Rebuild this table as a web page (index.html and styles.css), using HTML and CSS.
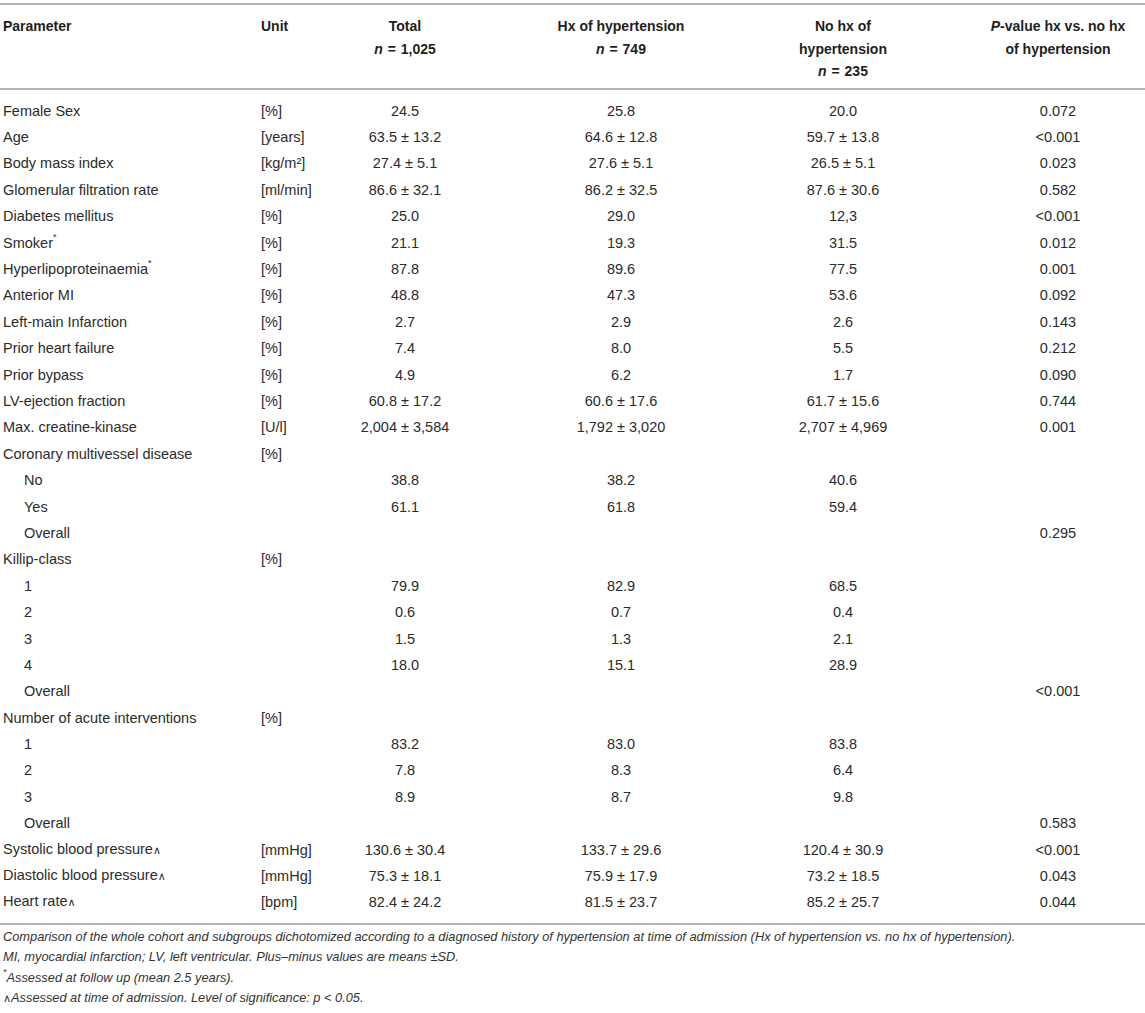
FILE: index.html
```html
<!DOCTYPE html>
<html>
<head>
<meta charset="utf-8">
<link rel="stylesheet" href="styles.css">
</head>
<body>
<div class="wrap">
<table class="tbl">
<colgroup>
<col class="c1"><col class="c2"><col class="c3"><col class="c4"><col class="c5"><col class="c6">
</colgroup>
<thead>
<tr>
<th class="l p1">Parameter</th>
<th class="l p2">Unit</th>
<th class="p3">Total<br><i>n</i> <span class="eq">=</span> 1,025</th>
<th class="p4">Hx of hypertension<br><i>n</i> <span class="eq">=</span> 749</th>
<th class="p5">No hx of<br>hypertension<br><i>n</i> <span class="eq">=</span> 235</th>
<th class="p6"><i>P</i>-value hx vs. no hx<br>of hypertension</th>
</tr>
</thead>
<tbody>
<tr class="first"><td class="p1">Female Sex</td><td class="p2">[%]</td><td class="p3">24.5</td><td class="p4">25.8</td><td class="p5">20.0</td><td class="p6">0.072</td></tr>
<tr><td class="p1">Age</td><td class="p2">[years]</td><td class="p3">63.5 ± 13.2</td><td class="p4">64.6 ± 12.8</td><td class="p5">59.7 ± 13.8</td><td class="p6">&lt;0.001</td></tr>
<tr><td class="p1">Body mass index</td><td class="p2">[kg/m²]</td><td class="p3">27.4 ± 5.1</td><td class="p4">27.6 ± 5.1</td><td class="p5">26.5 ± 5.1</td><td class="p6">0.023</td></tr>
<tr><td class="p1">Glomerular filtration rate</td><td class="p2">[ml/min]</td><td class="p3">86.6 ± 32.1</td><td class="p4">86.2 ± 32.5</td><td class="p5">87.6 ± 30.6</td><td class="p6">0.582</td></tr>
<tr><td class="p1">Diabetes mellitus</td><td class="p2">[%]</td><td class="p3">25.0</td><td class="p4">29.0</td><td class="p5">12,3</td><td class="p6">&lt;0.001</td></tr>
<tr><td class="p1">Smoker<sup>*</sup></td><td class="p2">[%]</td><td class="p3">21.1</td><td class="p4">19.3</td><td class="p5">31.5</td><td class="p6">0.012</td></tr>
<tr><td class="p1">Hyperlipoproteinaemia<sup>*</sup></td><td class="p2">[%]</td><td class="p3">87.8</td><td class="p4">89.6</td><td class="p5">77.5</td><td class="p6">0.001</td></tr>
<tr><td class="p1">Anterior MI</td><td class="p2">[%]</td><td class="p3">48.8</td><td class="p4">47.3</td><td class="p5">53.6</td><td class="p6">0.092</td></tr>
<tr><td class="p1">Left-main Infarction</td><td class="p2">[%]</td><td class="p3">2.7</td><td class="p4">2.9</td><td class="p5">2.6</td><td class="p6">0.143</td></tr>
<tr><td class="p1">Prior heart failure</td><td class="p2">[%]</td><td class="p3">7.4</td><td class="p4">8.0</td><td class="p5">5.5</td><td class="p6">0.212</td></tr>
<tr><td class="p1">Prior bypass</td><td class="p2">[%]</td><td class="p3">4.9</td><td class="p4">6.2</td><td class="p5">1.7</td><td class="p6">0.090</td></tr>
<tr><td class="p1">LV-ejection fraction</td><td class="p2">[%]</td><td class="p3">60.8 ± 17.2</td><td class="p4">60.6 ± 17.6</td><td class="p5">61.7 ± 15.6</td><td class="p6">0.744</td></tr>
<tr><td class="p1">Max. creatine-kinase</td><td class="p2">[U/l]</td><td class="p3">2,004 ± 3,584</td><td class="p4">1,792 ± 3,020</td><td class="p5">2,707 ± 4,969</td><td class="p6">0.001</td></tr>
<tr><td class="p1">Coronary multivessel disease</td><td class="p2">[%]</td><td class="p3"></td><td class="p4"></td><td class="p5"></td><td class="p6"></td></tr>
<tr><td class="p1 sub">No</td><td class="p2"></td><td class="p3">38.8</td><td class="p4">38.2</td><td class="p5">40.6</td><td class="p6"></td></tr>
<tr><td class="p1 sub">Yes</td><td class="p2"></td><td class="p3">61.1</td><td class="p4">61.8</td><td class="p5">59.4</td><td class="p6"></td></tr>
<tr><td class="p1 sub">Overall</td><td class="p2"></td><td class="p3"></td><td class="p4"></td><td class="p5"></td><td class="p6">0.295</td></tr>
<tr><td class="p1">Killip-class</td><td class="p2">[%]</td><td class="p3"></td><td class="p4"></td><td class="p5"></td><td class="p6"></td></tr>
<tr><td class="p1 sub">1</td><td class="p2"></td><td class="p3">79.9</td><td class="p4">82.9</td><td class="p5">68.5</td><td class="p6"></td></tr>
<tr><td class="p1 sub">2</td><td class="p2"></td><td class="p3">0.6</td><td class="p4">0.7</td><td class="p5">0.4</td><td class="p6"></td></tr>
<tr><td class="p1 sub">3</td><td class="p2"></td><td class="p3">1.5</td><td class="p4">1.3</td><td class="p5">2.1</td><td class="p6"></td></tr>
<tr><td class="p1 sub">4</td><td class="p2"></td><td class="p3">18.0</td><td class="p4">15.1</td><td class="p5">28.9</td><td class="p6"></td></tr>
<tr><td class="p1 sub">Overall</td><td class="p2"></td><td class="p3"></td><td class="p4"></td><td class="p5"></td><td class="p6">&lt;0.001</td></tr>
<tr><td class="p1">Number of acute interventions</td><td class="p2">[%]</td><td class="p3"></td><td class="p4"></td><td class="p5"></td><td class="p6"></td></tr>
<tr><td class="p1 sub">1</td><td class="p2"></td><td class="p3">83.2</td><td class="p4">83.0</td><td class="p5">83.8</td><td class="p6"></td></tr>
<tr><td class="p1 sub">2</td><td class="p2"></td><td class="p3">7.8</td><td class="p4">8.3</td><td class="p5">6.4</td><td class="p6"></td></tr>
<tr><td class="p1 sub">3</td><td class="p2"></td><td class="p3">8.9</td><td class="p4">8.7</td><td class="p5">9.8</td><td class="p6"></td></tr>
<tr><td class="p1 sub">Overall</td><td class="p2"></td><td class="p3"></td><td class="p4"></td><td class="p5"></td><td class="p6">0.583</td></tr>
<tr><td class="p1">Systolic blood pressure<span class="wedge">∧</span></td><td class="p2">[mmHg]</td><td class="p3">130.6 ± 30.4</td><td class="p4">133.7 ± 29.6</td><td class="p5">120.4 ± 30.9</td><td class="p6">&lt;0.001</td></tr>
<tr><td class="p1">Diastolic blood pressure<span class="wedge">∧</span></td><td class="p2">[mmHg]</td><td class="p3">75.3 ± 18.1</td><td class="p4">75.9 ± 17.9</td><td class="p5">73.2 ± 18.5</td><td class="p6">0.043</td></tr>
<tr class="last"><td class="p1">Heart rate<span class="wedge">∧</span></td><td class="p2">[bpm]</td><td class="p3">82.4 ± 24.2</td><td class="p4">81.5 ± 23.7</td><td class="p5">85.2 ± 25.7</td><td class="p6">0.044</td></tr>
</tbody>
</table>
<div class="notes">
<p>Comparison of the whole cohort and subgroups dichotomized according to a diagnosed history of hypertension at time of admission (Hx of hypertension vs. no hx of hypertension).<br>MI, myocardial infarction; LV, left ventricular. Plus–minus values are means ±SD.</p>
<p><sup>*</sup>Assessed at follow up (mean 2.5 years).</p>
<p><span class="wedge">∧</span>Assessed at time of admission. Level of significance: <i class="up">p</i> &lt; 0.05.</p>
</div>
</div>
</body>
</html>
```
FILE: styles.css
```css
html, body {
  margin: 0;
  padding: 0;
  background: #ffffff;
}
.wrap {
  width: 1145px;
  padding-top: 3px;
  font-family: "Liberation Sans", Arial, sans-serif;
  color: #2b2b2b;
}
.tbl {
  width: 1145px;
  border-collapse: collapse;
  table-layout: fixed;
  font-size: 14.5px;
}
.c1 { width: 257px; }
.c2 { width: 80px; }
.c3 { width: 200px; }
.c4 { width: 200px; }
.c5 { width: 200px; }
.c6 { width: 208px; }
.tbl thead tr {
  border-top: 2px solid #b4b4b4;
  border-bottom: 2px solid #b4b4b4;
}
.tbl th {
  font-weight: bold;
  font-size: 14px;
  color: #1e1e1e;
  vertical-align: top;
  text-align: center;
  line-height: 22.5px;
  padding-top: 10px;
  padding-bottom: 5px;
  height: 67px;
}
.tbl th.l { text-align: left; }
.eq { margin: 0 1px; }
.tbl td {
  height: 26.4px;
  padding-top: 0;
  padding-bottom: 0;
  line-height: 20px;
  text-align: center;
  vertical-align: middle;
  white-space: nowrap;
}
.tbl tbody tr.first td { padding-top: 8px; }
.tbl tbody tr.last { border-bottom: 2px solid #b4b4b4; }
.tbl tbody tr.last td { padding-bottom: 7px; }
.tbl .p1 { text-align: left; padding-left: 3px; padding-right: 0; }
.tbl .p2 { text-align: left; padding-left: 4px; padding-right: 0; }
.tbl .p3 { padding-left: 0; padding-right: 64px; }
.tbl .p4 { padding-left: 0; padding-right: 32px; }
.tbl .p5 { padding-left: 12px; padding-right: 0; }
.tbl .p6 { padding-left: 34px; padding-right: 0; }
.tbl td.sub { padding-left: 24px; }
sup {
  font-size: 9px;
  vertical-align: top;
  line-height: 1;
}
.wedge {
  font-family: "DejaVu Sans", sans-serif;
  font-size: 11px;
}
.notes {
  padding-top: 2px;
  font-size: 12.8px;
  font-style: italic;
  line-height: 20.5px;
  color: #333333;
}
.notes p {
  margin: 0;
  padding-left: 3px;
}
```
